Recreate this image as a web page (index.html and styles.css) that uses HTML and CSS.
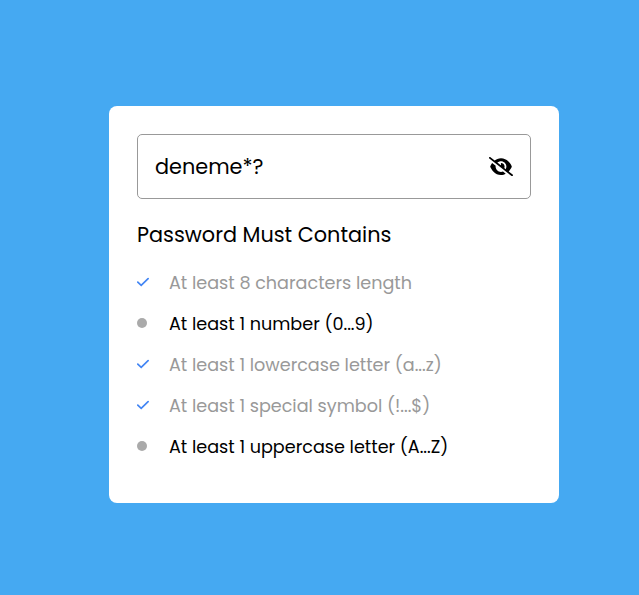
FILE: index.html
```html
<!DOCTYPE html>
<html lang="en">
<head>
<meta charset="utf-8">
<title>Password Check</title>
<link rel="stylesheet" href="styles.css">
</head>
<body>
<main class="card">
  <div class="field">
    <span class="value">deneme*?</span>
    <svg class="eye" viewBox="0 0 640 512"><path d="M38.8 5.1C28.4-3.1 13.3-1.2 5.1 9.2S-1.2 34.7 9.2 42.9l592 464c10.4 8.2 25.5 6.3 33.7-4.1s6.3-25.5-4.1-33.7L525.6 386.7c39.6-40.6 66.4-86.1 79.9-118.4c3.3-7.9 3.3-16.7 0-24.6c-14.9-35.7-46.2-87.7-93-131.1C465.5 68.8 400.8 32 320 32c-68.2 0-125 26.3-169.3 60.8L38.8 5.1zM223.1 149.5C248.6 126.2 282.7 112 320 112c79.5 0 144 64.5 144 144c0 24.9-6.3 48.3-17.4 68.7L408 294.5c8.4-19.3 10.6-41.4 4.8-63.3c-11.1-41.5-47.8-69.4-88.6-71.1c-5.8-.2-9.2 6.1-7.4 11.7c2.1 6.4 3.3 13.2 3.3 20.3c0 10.2-2.4 19.8-6.6 28.3l-90.3-70.8zM373 389.9c-16.4 6.5-34.3 10.1-53 10.1c-79.5 0-144-64.5-144-144c0-6.9 .5-13.6 1.4-20.2L83.1 161.5C60.3 191.2 44 220.8 34.5 243.7c-3.3 7.9-3.3 16.7 0 24.6c14.9 35.7 46.2 87.7 93 131.1C174.5 443.2 239.2 480 320 480c47.8 0 89.9-12.9 126.2-32.5L373 389.9z"/></svg>
  </div>
  <h1 class="title">Password Must Contains</h1>
  <ul class="rules">
    <li class="rule valid"><svg class="check" viewBox="0 0 12 10"><path d="M.8 5.2 4.2 8.4 11.1 1.7"/></svg><span>At least 8 characters length</span></li>
    <li class="rule"><i class="dot"></i><span>At least 1 number (0...9)</span></li>
    <li class="rule valid"><svg class="check" viewBox="0 0 12 10"><path d="M.8 5.2 4.2 8.4 11.1 1.7"/></svg><span>At least 1 lowercase letter (a...z)</span></li>
    <li class="rule valid"><svg class="check" viewBox="0 0 12 10"><path d="M.8 5.2 4.2 8.4 11.1 1.7"/></svg><span>At least 1 special symbol (!...$)</span></li>
    <li class="rule"><i class="dot"></i><span>At least 1 uppercase letter (A...Z)</span></li>
  </ul>
</main>
</body>
</html>
```
FILE: styles.css
```css
* { box-sizing: border-box; margin: 0; padding: 0; }
body {
  min-height: 100vh;
  padding-top: 106px;
  background: #45a9f2;
  font-family: Poppins, Inter, "Open Sans", sans-serif;
  font-weight: 400;
  color: #000;
}
.card {
  width: 450px;
  height: 397px;
  margin-left: 109px;
  padding: 28px;
  background: #fff;
  border-radius: 8px;
}
.field {
  display: flex;
  align-items: center;
  justify-content: space-between;
  height: 65px;
  padding: 0 17px;
  border: 1px solid #999;
  border-radius: 5px;
}
.value { font-size: 20.8px; }
.eye { width: 24px; height: 19.2px; }
.title {
  margin-top: 20px;
  font-size: 20.8px;
  line-height: 32px;
  font-weight: 400;
  white-space: nowrap;
}
.rules { margin-top: 11px; list-style: none; }
.rule {
  display: flex;
  align-items: center;
  height: 41px;
  font-size: 17.6px;
  white-space: nowrap;
}
.valid { color: #999; }
.check {
  width: 12px;
  height: 10px;
  margin: -2px 20px 0 0;
  fill: none;
  stroke: #4285f4;
  stroke-width: 1.7;
  stroke-linecap: round;
}
.dot {
  width: 10px;
  height: 10px;
  margin: -2px 22px 0 0;
  border-radius: 50%;
  background: #aaa;
}
```
